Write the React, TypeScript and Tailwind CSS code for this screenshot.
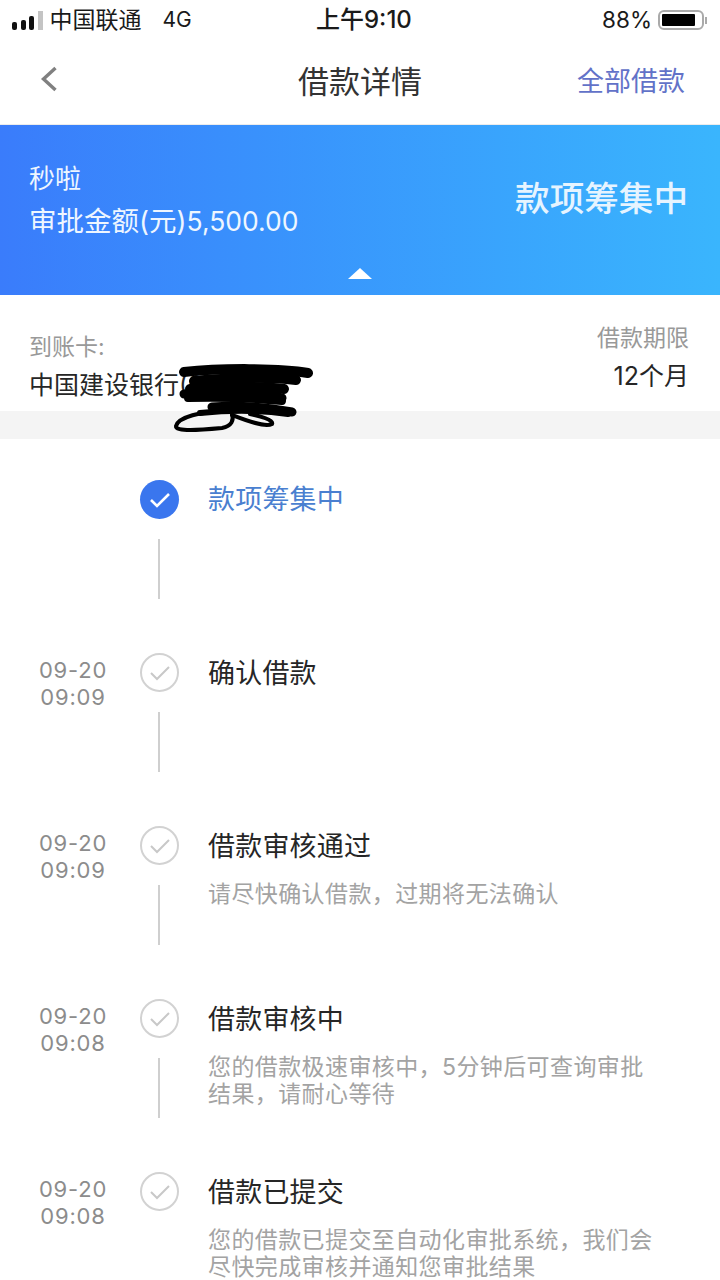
const steps = [
  { date: '', time: '', title: '款项筹集中', active: true, desc: [] as string[] },
  { date: '09-20', time: '09:09', title: '确认借款', desc: [] },
  { date: '09-20', time: '09:09', title: '借款审核通过', desc: ['请尽快确认借款，过期将无法确认'] },
  { date: '09-20', time: '09:08', title: '借款审核中', desc: ['您的借款极速审核中，5分钟后可查询审批', '结果，请耐心等待'] },
  { date: '09-20', time: '09:08', title: '借款已提交', desc: ['您的借款已提交至自动化审批系统，我们会', '尽快完成审核并通知您审批结果'], last: true },
];

function StatusBar() {
  return (
    <div className="h-[40px] flex items-center pl-[12px] pr-[13px] text-[23px] text-[#1a1a1a]">
      <div className="flex items-center w-[304px]">
        <div className="flex items-end gap-[3.5px] h-[19px] mr-[7px]">
          <span className="w-[5px] h-[8px] rounded-[2px] bg-[#111]" />
          <span className="w-[5px] h-[10px] rounded-[2px] bg-[#111]" />
          <span className="w-[5px] h-[14px] rounded-[2px] bg-[#111]" />
          <span className="w-[5px] h-[19px] bg-[#c4c4c4]" />
        </div>
        <span>中国联通</span>
        <span className="ml-[21px] text-[21px]">4G</span>
      </div>
      <div className="text-[24px] font-medium">上午9:10</div>
      <div className="flex flex-1 items-center justify-end">
        <span className="mr-[6px] text-[22.5px]">88%</span>
        <div className="w-[46px] h-[20px] border-2 border-[#aaa] rounded-[6px] p-[2px]">
          <div className="h-full w-[88%] bg-black rounded-[1px]" />
        </div>
        <div className="w-[2px] h-[7px] bg-[#aaa] ml-[1px]" />
      </div>
    </div>
  );
}

function Step({ step }: { step: (typeof steps)[number] }) {
  return (
    <div className="h-[173px] flex">
      <div className="w-[140px] pl-[6px] pt-[4px] text-center text-[22px] leading-[27px] text-[#8c8c8c] tracking-[0.8px]">
        <div>{step.date}</div>
        <div>{step.time}</div>
      </div>
      <div className="w-[39px] flex flex-col items-center">
        {step.active ? (
          <div className="w-[39px] h-[39px] rounded-full bg-[#3a76ee] flex items-center justify-center">
            <svg width="22" height="16" viewBox="0 0 22 16" fill="none" stroke="#fff" strokeWidth="2.6">
              <path d="M2 8l6 6L20 2" />
            </svg>
          </div>
        ) : (
          <div className="w-[39px] h-[39px] rounded-full border-2 border-[#d2d2d2] flex items-center justify-center">
            <svg width="22" height="16" viewBox="0 0 22 16" fill="none" stroke="#c8c8c8" strokeWidth="2">
              <path d="M2 8l6 6L20 2" />
            </svg>
          </div>
        )}
        {!step.last && <div className="w-[2px] h-[60px] mt-[20px] -ml-[1px] bg-[#cfcfcf]" />}
      </div>
      <div className="ml-[29px] flex-1">
        <div className={`text-[27px] leading-[40px] tracking-[0.2px] ${step.active ? 'text-[#4a7fd0]' : 'text-[#262626] mt-[0.5px]'}`}>
          {step.title}
        </div>
        <div className="mt-[14px] text-[23px] leading-[27px] tracking-[0.4px] text-[#a3a3a3]">
          {step.desc.map((line) => (
            <div key={line}>{line}</div>
          ))}
        </div>
      </div>
    </div>
  );
}

export default function App() {
  return (
    <div className="w-[720px] h-[1280px] overflow-hidden bg-white font-['Inter','Noto_Sans_CJK_SC',sans-serif]">
      <StatusBar />

      {/* Nav */}
      <div className="h-[85px] flex items-center justify-between pl-[40px] pr-[35px] border-b border-[#ececec] relative">
        <svg className="-mt-[7px]" width="18" height="26" viewBox="0 0 18 26" fill="none" stroke="#808080" strokeWidth="3.4">
          <path d="M15.5 2L3.5 13l12 11" />
        </svg>
        <div className="absolute left-0 right-0 text-center text-[31px] text-[#333]">借款详情</div>
        <div className="text-[27px] text-[#6272c8]">全部借款</div>
      </div>

      {/* Banner */}
      <div className="h-[170px] bg-gradient-to-r from-[#3a7cfb] to-[#3ab5fd] relative flex justify-between items-start pl-[29px] pr-[32px] text-white">
        <div className="pt-[33px] text-[26.5px] leading-[42px] text-[#eef6ff]">
          <div className="text-[26px]">秒啦</div>
          <div>
            <span className="text-[27.5px]">审批金额(元)</span>5,500.00
          </div>
        </div>
        <div className="pt-[48px] text-[34.6px] leading-[50px] font-medium text-[#e6f4ff]">款项筹集中</div>
        <div className="absolute bottom-[16px] left-[348px] w-0 h-0 border-l-[12px] border-r-[12px] border-b-[11px] border-l-transparent border-r-transparent border-b-white" />
      </div>

      {/* Card info */}
      <div className="h-[116px] flex justify-between pl-[29px] pr-[31px] relative">
        <div className="pt-[35px]">
          <div className="text-[23px] leading-[34px] text-[#999]">到账卡:</div>
          <div className="text-[25px] leading-[40px] text-[#262626] mt-[1px]">中国建设银行(0</div>
        </div>
        <div className="pt-[25px] text-right">
          <div className="text-[23px] leading-[36px] text-[#999]">借款期限</div>
          <div className="text-[25px] leading-[38px] text-[#262626] mt-[1px]">12个月</div>
        </div>
        {/* scribble over the card number */}
        <svg className="absolute left-[170px] top-[65px] z-10" width="150" height="76" viewBox="0 0 150 76" fill="none" stroke="#000" strokeLinecap="round">
          <path d="M14 12C50 8 110 8 138 13" strokeWidth="10" />
          <path d="M24 21C60 17 100 17 126 20" strokeWidth="10" />
          <path d="M20 29C60 26 90 26 114 29" strokeWidth="10" />
          <path d="M14 34C50 31 90 33 112 38" strokeWidth="9" />
          <path d="M18 38C50 37 90 39 112 41" strokeWidth="8" />
          <path d="M42 47C70 45 100 48 122 52" strokeWidth="9" />
          <path d="M30 53C60 50 90 50 118 54" strokeWidth="6" />
          <path d="M60 52C30 50 8 58 6 66C5 72 30 70 52 68C62 66 64 60 62 54" strokeWidth="4" />
          <path d="M62 55C75 60 95 68 102 64C104 60 90 56 80 54" strokeWidth="4" />
        </svg>
      </div>

      <div className="h-[28px] bg-[#f4f4f4]" />

      {/* Timeline */}
      <div className="pt-[41px]">
        {steps.map((step) => (
          <Step key={step.title} step={step} />
        ))}
      </div>
    </div>
  );
}
